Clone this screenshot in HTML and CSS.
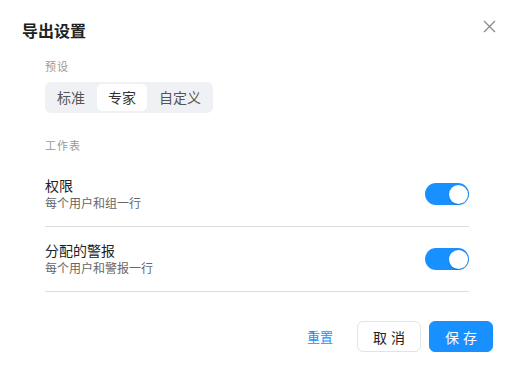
FILE: index.html
```html
<!DOCTYPE html>
<html lang="zh-CN">
<head>
<meta charset="utf-8">
<link rel="stylesheet" href="styles.css">
</head>
<body>
<div class="dialog">
  <div class="header">
    <h1 class="title">导出设置</h1>
    <button class="close" aria-label="关闭">
      <svg width="13" height="13" viewBox="0 0 13 13"><path d="M1 1L12 12M12 1L1 12" stroke="#8a8a8a" stroke-width="1.3" fill="none"/></svg>
    </button>
  </div>
  <div class="body">
    <div class="label">预设</div>
    <div class="segmented">
      <span class="seg">标准</span>
      <span class="seg active">专家</span>
      <span class="seg">自定义</span>
    </div>
    <div class="label sheet">工作表</div>
    <div class="row">
      <div class="texts">
        <div class="row-title">权限</div>
        <div class="row-sub">每个用户和组一行</div>
      </div>
      <span class="toggle"><span class="knob"></span></span>
    </div>
    <div class="row">
      <div class="texts">
        <div class="row-title">分配的警报</div>
        <div class="row-sub">每个用户和警报一行</div>
      </div>
      <span class="toggle"><span class="knob"></span></span>
    </div>
  </div>
  <div class="footer">
    <button class="link">重置</button>
    <button class="btn">取消</button>
    <button class="btn primary">保存</button>
  </div>
</div>
</body>
</html>
```
FILE: styles.css
```css
* { box-sizing: border-box; }
html, body { margin: 0; padding: 0; background: #fff; }
body {
  font-family: "Noto Sans CJK SC", "Noto Sans", sans-serif;
  color: #333;
}
.dialog {
  width: 514px;
  height: 373px;
  background: #fff;
  display: flex;
  flex-direction: column;
}
.header {
  display: flex;
  align-items: center;
  justify-content: space-between;
  padding: 20px 18px 0 22px;
  height: 40px;
}
.title {
  margin: 0;
  font-size: 16px;
  line-height: 20px;
  font-weight: 700;
  color: #222;
}
.close {
  border: 0;
  background: none;
  padding: 0;
  width: 13px;
  height: 13px;
  display: flex;
  margin-top: -8px;
}
.body {
  padding: 18px 45px 0 45px;
}
.label {
  font-size: 11px;
  line-height: 16px;
  color: #999;
  letter-spacing: 1px;
}
.segmented {
  display: inline-flex;
  margin-top: 8px;
  padding: 2px 0;
  background: #f0f1f5;
  border-radius: 6px;
  height: 31px;
}
.seg {
  padding: 0 12px;
  font-size: 14px;
  line-height: 27px;
  color: #555;
  border-radius: 5px;
}
.seg.active {
  background: #fff;
  color: #333;
  padding: 0 11px;
}
.label.sheet { margin-top: 24px; }
.row {
  display: flex;
  align-items: center;
  justify-content: space-between;
  padding: 14px 0;
  border-bottom: 1px solid #dcdcdc;
}
.row:first-of-type { margin-top: 9px; }
.sheet + .row { margin-top: 9px; }
.row-title {
  font-size: 14px;
  line-height: 18px;
  color: #222;
}
.row-sub {
  font-size: 12px;
  line-height: 18px;
  color: #666;
}
.toggle {
  width: 44px;
  height: 22px;
  border-radius: 11px;
  background: #1890ff;
  display: flex;
  align-items: center;
  justify-content: flex-end;
  padding-right: 1px;
}
.knob {
  width: 19px;
  height: 19px;
  border-radius: 50%;
  background: #fff;
  box-shadow: 0 1px 2px rgba(0, 0, 0, 0.2);
}
.footer {
  display: flex;
  justify-content: flex-end;
  align-items: center;
  gap: 8px;
  padding: 29px 21px 0 0;
}
.link {
  border: 0;
  background: none;
  font-family: inherit;
  font-size: 13px;
  color: #1890ff;
  padding: 0;
  margin-right: 16px;
}
.btn {
  width: 64px;
  height: 31px;
  border: 1px solid #e3e3e3;
  border-radius: 6px;
  background: #fff;
  font-family: inherit;
  font-size: 14px;
  color: #222;
  letter-spacing: 4px;
  padding: 0 0 0 4px;
}
.btn.primary {
  background: #1890ff;
  border-color: #1890ff;
  color: #fff;
}
```
